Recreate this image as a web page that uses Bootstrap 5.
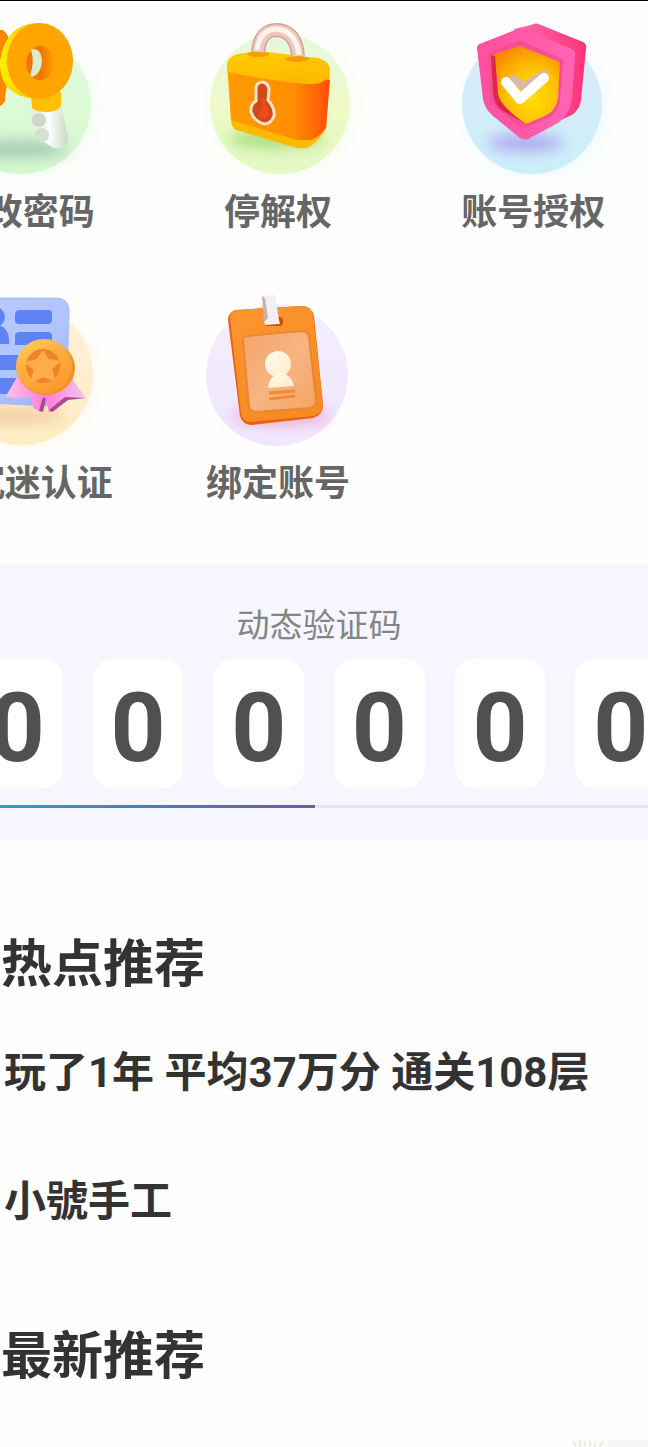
<!DOCTYPE html>
<html lang="zh-CN">
<head>
<meta charset="utf-8">
<meta name="viewport" content="width=device-width, initial-scale=1">
<title>账号安全</title>
<link href="https://cdn.jsdelivr.net/npm/bootstrap@5.3.0/dist/css/bootstrap.min.css" rel="stylesheet">
<style>
body{font-family:Roboto,"Noto Sans CJK SC",sans-serif;background:#fefefe;color:#333;overflow-x:hidden}
.screen{border-top:1px solid #000}
.tools{margin:0 -13px 0 -105px;row-gap:33px;padding-bottom:54px}
.tool{color:#666;font-size:36px;line-height:52px;font-weight:700;white-space:nowrap}
.tool svg{width:192px;height:186px;display:block}
.code-panel{background:#f6f6fe;padding:38px 0 32px}
.code-title{font-size:33px;line-height:48px;font-weight:400;color:#858588;margin:0 10px 9px 0}
.digits{gap:30px;margin:0 -18px 17px -28px}
.digit{height:129px;background:#fff;border-radius:20px;font-size:96px;line-height:1;font-weight:700;color:#505050;padding-top:8px}
.timer{height:3px;border-radius:0;background:#e6e5ef}
.timer .progress-bar{background:linear-gradient(90deg,#26a5ba,#4f7bad 50%,#7a589f)}
.feed-title{font-size:51px;line-height:60px;font-weight:700;margin:0;padding-left:1px}
.feed-link{font-size:42px;line-height:60px;font-weight:700;color:#333;padding-left:4px}
.hot{padding-top:95px}
.hot-list{padding-top:48px;gap:69px}
.latest{padding-top:95px}
.thumb{width:76px;height:7px;margin-top:53px}
</style>
</head>
<body>
<main class="screen overflow-hidden">
<nav class="tools row g-0">
  <a href="#" class="tool col-4 d-flex flex-column align-items-center text-decoration-none">
    <svg viewBox="-73 1 192 186" aria-hidden="true">
      <defs>
        <filter id="soft" x="-50%" y="-100%" width="200%" height="300%"><feGaussianBlur stdDeviation="7"/></filter>
        <linearGradient id="kc" x2="0" y2="1"><stop stop-color="#e6fbdf"/><stop offset="1" stop-color="#d3f8cd"/></linearGradient>
        <linearGradient id="kg" x1="0" y1="0" x2="1" y2="0"><stop stop-color="#fff000"/><stop offset=".5" stop-color="#ffc000"/><stop offset="1" stop-color="#ff9a00"/></linearGradient>
        <linearGradient id="kw" x2="1" y2="0"><stop stop-color="#e2eadf"/><stop offset=".5" stop-color="#fbfdf8"/><stop offset="1" stop-color="#cbd9c6"/></linearGradient>
        <linearGradient id="kh"><stop stop-color="#ff9100"/><stop offset=".5" stop-color="#ee7400"/><stop offset="1" stop-color="#ff9c00"/></linearGradient>
      </defs>
      <circle cx="27" cy="108" r="72" fill="#dcfbd4" opacity=".3" filter="url(#soft)"/>
      <circle cx="21" cy="104" r="70" fill="url(#kc)"/>
      <ellipse cx="18" cy="149" rx="50" ry="8" fill="#a3c8b5" filter="url(#soft)"/>
      <path d="M-30 30H3Q12 36 11 65L5 96Q7 104-4 108L-30 94Z" fill="#ff8600"/>
      <path d="M32 108 61 106 68 137Q69 145 61 148 54 149 50 146 46 142 42 142 36 140 35 134 37 130 34 126L31 118Z" fill="url(#kw)"/>
      <circle cx="39" cy="120" r="7" fill="#cbd7c8"/><circle cx="42" cy="135" r="7" fill="#d5dfd1"/>
      <path d="M31 92 61 92 61 106Q57 112 46 112 36 112 32 108Z" fill="#ffc000"/>
      <path d="M38 23Q5 24 0 61-1 80 10 90 26 102 48 97L60 31Z" fill="url(#kg)"/>
      <ellipse cx="40" cy="61" rx="33" ry="38" fill="#ffa500"/>
      <ellipse cx="40" cy="63" rx="14" ry="17" fill="url(#kh)"/>
      <path d="M32 49Q42 49 42 62 41 74 32 77 27 71 27 61 28 53 32 49Z" fill="#dceccb"/>
      <path d="M31 50Q35 62 30 75 25 69 27 57Z" fill="#f37400"/>
    </svg>
    <span>修改密码</span>
  </a>
  <a href="#" class="tool col-4 d-flex flex-column align-items-center text-decoration-none">
    <svg viewBox="182 1 192 186" aria-hidden="true">
      <defs>
        <linearGradient id="lc" x2="0" y2="1"><stop stop-color="#e3f9dc"/><stop offset=".5" stop-color="#f0f9c9"/><stop offset="1" stop-color="#e1f9c2"/></linearGradient>
        <linearGradient id="lf"><stop stop-color="#ff9b00"/><stop offset=".65" stop-color="#ff8d00"/><stop offset="1" stop-color="#ff4d0b"/></linearGradient>
        <linearGradient id="lt" x2=".2" y2="1"><stop stop-color="#ffce00"/><stop offset="1" stop-color="#ffb900"/></linearGradient>
      </defs>
      <circle cx="283" cy="107" r="73" fill="#edf9d2" opacity=".3" filter="url(#soft)"/>
      <circle cx="280" cy="104" r="70" fill="url(#lc)"/>
      <ellipse cx="276" cy="139" rx="48" ry="9" fill="#a7dd7e" filter="url(#soft)"/>
      <path d="M227 66Q228 56 239 54L318 58Q330 61 330 71L326 128Q323 136 311 146 306 149 297 148L236 130Q231 127 231 119Z" fill="#ffba00"/>
      <path d="M228 68 330 80 326 128Q319 137 311 140L297 140 231 120Z" fill="url(#lf)"/>
      <path d="M227 67Q226 57 238 54L260 51 316 58Q330 61 330 72 326 84 313 84 290 84 227 72Z" fill="url(#lt)"/>
      <ellipse cx="258" cy="54" rx="11" ry="3" fill="#f79d00"/><ellipse cx="297" cy="59" rx="12" ry="3" fill="#f79b00"/>
      <path d="M258 52Q260 30 277 30 296 31 298 56" fill="none" stroke="#d3a095" stroke-width="14"/>
      <path d="M258 52Q260 30 277 30 296 31 298 56" fill="none" stroke="#ecc9bf" stroke-width="11"/>
      <path d="M257 50Q260 29 277 29 296 31 299 55" fill="none" stroke="#fff3ec" stroke-width="5"/>
      <path d="M256 87Q257 82 263 82 269 84 269 90L268 100Q275 108 274 116 271 124 264 124 254 121 251 112 250 105 256 101Z" fill="#cf4a14" stroke="#ffe1cb" stroke-width="3"/>
      <path d="M265 98V104Q273 111 266 119L258 116 262 105V98Z" fill="#e84e17"/>
    </svg>
    <span>停解权</span>
  </a>
  <a href="#" class="tool col-4 d-flex flex-column align-items-center text-decoration-none">
    <svg viewBox="437 1 192 186" aria-hidden="true">
      <defs>
        <linearGradient id="sc" x2="0" y2="1"><stop stop-color="#dceafa"/><stop offset="1" stop-color="#cceff9"/></linearGradient>
        <radialGradient id="sy" cx=".6" cy=".65" r=".75"><stop stop-color="#ffe000"/><stop offset=".5" stop-color="#ffc000"/><stop offset="1" stop-color="#f78000"/></radialGradient>
        <linearGradient id="sp" x2="1"><stop stop-color="#ff4f9d"/><stop offset="1" stop-color="#ff65b4"/></linearGradient>
        <linearGradient id="sr"><stop stop-color="#ff6bb5"/><stop offset="1" stop-color="#ff3275"/></linearGradient>
      </defs>
      <circle cx="536" cy="108" r="73" fill="#d8f2fb" opacity=".3" filter="url(#soft)"/>
      <circle cx="532" cy="104" r="70" fill="url(#sc)"/>
      <ellipse cx="526" cy="143" rx="38" ry="9" fill="#b0aaf0" filter="url(#soft)"/>
      <path d="M514 29 531 25Q536 22 541 25L583 42Q587 44 586 49L581 100Q580 109 572 115L540 130Z" fill="url(#sr)"/>
      <path d="M520 28 572 49Q576 51 575 56L572 99Q570 114 558 123L530 138Q526 141 520 138L493 116Q484 108 483 99L477 48Q477 44 482 43Z" fill="url(#sp)"/>
      <path d="M520 40 562 59Q564 60 563 64L560 98Q559 111 550 117L527 127Q523 128 519 126L498 110Q491 104 490 95L488 57Q488 53 492 51Z" fill="#f54e96"/>
      <path d="M520 46 560 62 558 98Q556 110 547 115L526 124 502 109Q494 103 493 94L491 55Z" fill="url(#sy)"/>
      <path d="M491 55 495 56 498 94Q500 106 526 124L501 110Q494 103 493 94Z" fill="#df254e"/>
      <path d="m514 79 9 8 21-13" fill="none" stroke="#d8b9a8" stroke-width="8" stroke-linecap="round"/>
      <path d="m506 82 14 17 24-21" fill="none" stroke="#fff" stroke-width="10" stroke-linecap="round" stroke-linejoin="round"/>
    </svg>
    <span>账号授权</span>
  </a>
  <a href="#" class="tool col-4 d-flex flex-column align-items-center text-decoration-none">
    <svg viewBox="-73 272 192 186" aria-hidden="true">
      <defs>
        <linearGradient id="cc" x2="0" y2="1"><stop stop-color="#fff0d9"/><stop offset="1" stop-color="#ffedc4"/></linearGradient>
        <linearGradient id="cb" x2="1" y2="1"><stop stop-color="#b9caff"/><stop offset=".6" stop-color="#b0c4ff"/><stop offset="1" stop-color="#94aff5"/></linearGradient>
        <linearGradient id="cg" x2=".6" y2="1"><stop stop-color="#ffd35b"/><stop offset=".5" stop-color="#ffad40"/><stop offset="1" stop-color="#fa9b2c"/></linearGradient>
        <linearGradient id="cr" x2="1"><stop stop-color="#ffc2e5"/><stop offset=".5" stop-color="#fb7cda"/><stop offset="1" stop-color="#f5c8f0"/></linearGradient>
      </defs>
      <circle cx="27" cy="378" r="72" fill="#fff0ce" opacity=".3" filter="url(#soft)"/>
      <circle cx="22" cy="374" r="71" fill="url(#cc)"/>
      <ellipse cx="15" cy="416" rx="50" ry="7" fill="#f0cba0" filter="url(#soft)"/>
      <path d="M-45 298H57Q69 299 69 311L67 386Q63 406 45 406L-30 402Z" fill="url(#cb)" stroke="#a9bdf7" stroke-width="1"/>
      <g fill="#5e83f5"><circle cx="-5" cy="317" r="10"/><path d="M-25 344Q-22 325-5 325 8 325 9 339V344ZM15 315Q15 310 20 310H49Q52 310 52 314V320Q52 324 48 324H19Q15 324 15 320ZM15 336Q15 332 20 332H49Q52 332 52 337V345H15ZM-30 355H20V370H-30ZM-30 378H20V394H-30Z"/></g>
      <path d="M17 377 6 396Q14 400 32 397L33 408 41 412 46 400 49 412 56 410 65 399 86 398 70 376Z" fill="url(#cr)"/>
      <path d="M43 397 46 399 43 412 39 411ZM86 398 68 400 52 412 49 410 65 397Z" fill="#ad488f"/>
      <ellipse cx="46" cy="368" rx="29" ry="27" fill="#f19226"/>
      <ellipse cx="44" cy="366" rx="28" ry="27" fill="url(#cg)"/>
      <circle cx="43" cy="366" r="17" fill="#ed8520"/>
      <path d="m43 353 4 8 10 1-7 7 3 10-10-4-10 5 3-11-8-6 10-2Z" fill="#ffac4c" stroke="#ffac4c" stroke-width="4" stroke-linejoin="round"/>
    </svg>
    <span>防沉迷认证</span>
  </a>
  <a href="#" class="tool col-4 d-flex flex-column align-items-center text-decoration-none">
    <svg viewBox="182 272 192 186" aria-hidden="true">
      <defs>
        <linearGradient id="bc" x2="0" y2="1"><stop stop-color="#f3effd"/><stop offset="1" stop-color="#f0e6ff"/></linearGradient>
        <linearGradient id="bo" x2=".5" y2="1"><stop stop-color="#fb962f"/><stop offset="1" stop-color="#f98a22"/></linearGradient>
        <linearGradient id="bi" x2="1" y2="1"><stop stop-color="#f4a36b"/><stop offset=".5" stop-color="#f7b581"/><stop offset="1" stop-color="#f4a366"/></linearGradient>
        <linearGradient id="bw" x2="1" y2="1"><stop stop-color="#fffdf2"/><stop offset="1" stop-color="#ffe9c5"/></linearGradient>
      </defs>
      <circle cx="277" cy="375" r="71" fill="url(#bc)"/>
      <ellipse cx="281" cy="416" rx="50" ry="8" fill="#f0a6d0" filter="url(#soft)"/>
      <path d="M228 320Q228 313 235 310L302 306Q312 307 314 316L323 405Q323 415 313 418L252 425Q243 425 240 416Z" fill="#e76313"/>
      <path d="M230 318Q230 312 237 310L303 306Q311 306 313 315L323 404Q323 413 313 416L250 422Q243 422 241 413Z" fill="url(#bo)"/>
      <path d="M243 341Q242 337 247 336L301 331Q308 331 309 337L316 400Q316 407 310 408L257 412Q250 412 249 406Z" fill="url(#bi)" stroke="#e88735" stroke-width="2"/>
      <rect x="264" y="317" width="19" height="9" rx="4" fill="#cf4a12"/>
      <path d="M262 296 275 295 279 320 280 324 265 325 264 322 266 318Z" fill="#f4eeee"/><path d="M262 296 264 322 268 318 265 298Z" fill="#c9b1ad"/>
      <circle cx="278" cy="364" r="13" fill="url(#bw)"/>
      <path d="M268 388Q270 374 281 373 291 374 294 386Z" fill="url(#bw)"/>
      <path d="m269 393 26-2m-26 8 26-3" stroke="#ef8c35" stroke-width="3"/>
    </svg>
    <span>绑定账号</span>
  </a>
</nav>

<section class="code-panel">
  <h2 class="code-title text-center">动态验证码</h2>
  <div class="digits d-flex">
    <span class="digit flex-fill d-flex align-items-center justify-content-center">0</span>
    <span class="digit flex-fill d-flex align-items-center justify-content-center">0</span>
    <span class="digit flex-fill d-flex align-items-center justify-content-center">0</span>
    <span class="digit flex-fill d-flex align-items-center justify-content-center">0</span>
    <span class="digit flex-fill d-flex align-items-center justify-content-center">0</span>
    <span class="digit flex-fill d-flex align-items-center justify-content-center">0</span>
  </div>
  <div class="progress timer" role="progressbar" aria-label="剩余时间" aria-valuenow="49" aria-valuemin="0" aria-valuemax="100">
    <div class="progress-bar" style="width:48.6%"></div>
  </div>
</section>

<section class="hot">
  <h2 class="feed-title">热点推荐</h2>
  <div class="hot-list d-flex flex-column">
    <a href="#" class="feed-link text-decoration-none text-nowrap">玩了1年 平均37万分 通关108层</a>
    <a href="#" class="feed-link text-decoration-none text-nowrap">小號手工</a>
  </div>
</section>
<section class="latest">
  <h2 class="feed-title">最新推荐</h2>
  <svg class="thumb d-block ms-auto" viewBox="0 0 76 7" aria-hidden="true">
    <path d="M0 0H76V7H0Z" fill="#fcfbfa"/><path d="M36 0H76V7H36Z" fill="#f7f6f4"/>
    <path d="M1 1 4 6M8 0V7M13 1V6M18 0V7M23 2V7M31 1 28 6" stroke="#ecece5" stroke-width="2"/>
  </svg>
</section>
</main>
<script src="https://cdn.jsdelivr.net/npm/bootstrap@5.3.0/dist/js/bootstrap.bundle.min.js"></script>
</body>
</html>
